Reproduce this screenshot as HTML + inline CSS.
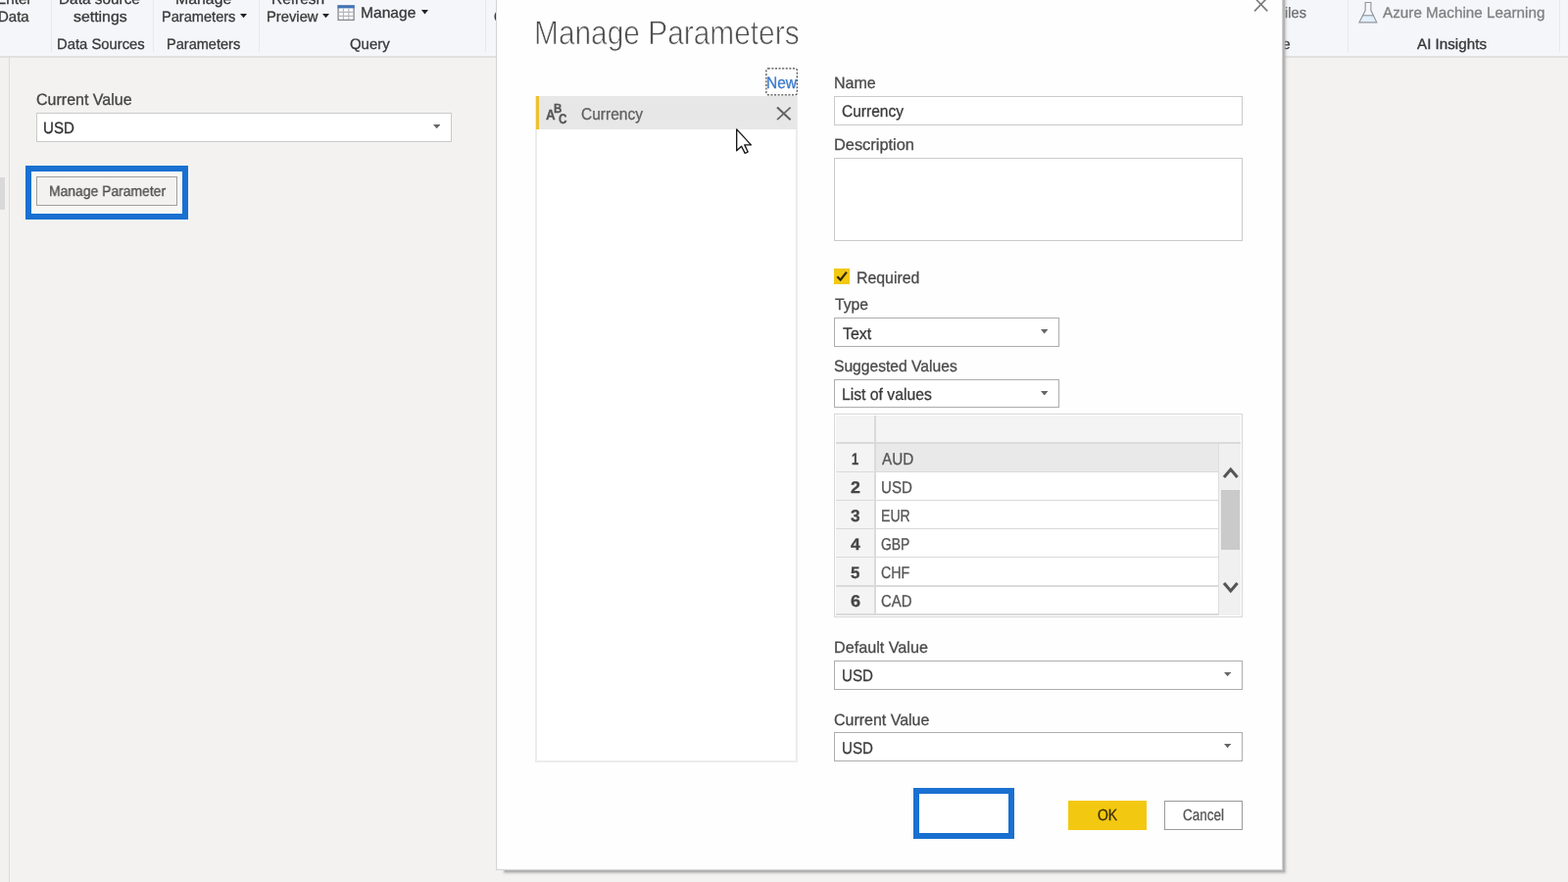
<!DOCTYPE html>
<html lang="en">
<head>
<meta charset="utf-8">
<title>Manage Parameters</title>
<style>
html,body{margin:0;padding:0;}
body{width:1600px;height:900px;overflow:hidden;position:relative;background:#f3f2f0;
 font-family:"Liberation Sans",sans-serif;}
.b,.g{position:absolute;box-sizing:border-box;display:block;margin:0;padding:0;}
.t{position:absolute;white-space:nowrap;transform-origin:0 0;display:block;margin:0;padding:0;
 font-weight:400;-webkit-text-stroke:0.3px currentColor;text-rendering:geometricPrecision;}
#app{left:0;top:0;width:1600px;height:900px;overflow:hidden;will-change:transform;}
#ribbon{overflow:hidden;}
.ribbon-bg{background:#f4f6fa;}
.ribbon-line{background:#e0e0e1;}
.sep{background:#e6e8ec;}
#nav-strip{background:#f2f1ef;border-right:1.2px solid #dcdbda;}
#nav-thumb{background:#d9d9d9;}
#dialog-shadow{background:#b3b2b3;box-shadow:0 0 2.4px 0.8px rgba(160,160,160,.7);}
.dialog-bg{background:#fefefe;border:1.5px solid #d3d3d3;}
#dialog-title{-webkit-text-stroke:0.75px #fefefe;}
.inp{background:#fff;border:1px solid #cacaca;}
.sel{background:#fff;border:1.2px solid #adadad;}
.hl{border:6px solid #1a70d1;}
.param-list{border:2px solid #ececec;border-top:none;background:#fff;}
.param-item{background:#e7e7e7;}
.param-item-bar{background:#ecc32f;}
.grid{background:#fff;border:1.5px solid #d7d7d7;}
.grid-head,.grid-rownum{background:#f4f4f4;}
.grid-sel{background:#e9e9e9;}
.grid-line{background:#dadada;}
.vscroll{background:#f0f0f0;border-left:1px solid #dedede;}
.vthumb{background:#cacaca;}
.btn-primary{background:#f3c811;}
.btn-default{background:#fff;border:1px solid #9a9a9a;}
.btn-plain{border:1px solid #a2a09e;background:#f3f2f0;}
.checkbox{background:#f2c812;}
</style>
</head>
<body>

<div id="app" class="g" style="left:0px;top:0px;width:1600.00px;height:900.00px;">
<header id="ribbon" class="g" role="toolbar" aria-label="Ribbon" style="left:0px;top:0px;width:1600.00px;height:58.50px;">
<i class="b ribbon-bg" style="left:0.00px;top:0.00px;width:1600.00px;height:57.00px;"></i>
<i class="b ribbon-line" style="left:0.00px;top:57.00px;width:1600.00px;height:1.50px;"></i>
<div class="g rgroup" style="left:0px;top:0px;width:52.00px;height:57.00px;">
<span class="t" style="left:-4.22px;top:-9.00px;font-size:15.12px;line-height:17px;color:#383838;transform:scaleX(1.0089);">Enter</span>
<span class="t" style="left:-1.70px;top:9.00px;font-size:15.12px;line-height:17px;color:#383838;transform:scaleX(0.9927);">Data</span>
</div>
<div class="b sep" style="left:52.00px;top:0.00px;width:1.00px;height:52.50px;"></div>
<div class="g rgroup" style="left:53px;top:0px;width:103.00px;height:57.00px;">
<span class="t" style="left:6.77px;top:-9.00px;font-size:15.12px;line-height:17px;color:#383838;transform:scaleX(1.0173);">Data source</span>
<span class="t" style="left:21.56px;top:9.00px;font-size:15.12px;line-height:17px;color:#383838;transform:scaleX(1.0504);">settings</span>
<span class="t rlabel" style="left:5.21px;top:37.00px;font-size:15.12px;line-height:17px;color:#383838;transform:scaleX(0.9803);">Data Sources</span>
</div>
<div class="b sep" style="left:156.00px;top:0.00px;width:1.00px;height:52.50px;"></div>
<div class="g rgroup" style="left:157px;top:0px;width:106.50px;height:57.00px;">
<span class="t" style="left:22.33px;top:-9.00px;font-size:15.12px;line-height:17px;color:#383838;transform:scaleX(1.0501);">Manage</span>
<span class="t" style="left:7.83px;top:9.00px;font-size:15.12px;line-height:17px;color:#383838;transform:scaleX(0.9656);">Parameters</span>
<svg class="b caret" aria-hidden="true" style="left:87.50px;top:14.40px" width="7.00" height="4.20" viewBox="0 0 10 10" preserveAspectRatio="none"><polygon points="0,0 10,0 5,10" fill="#222"/></svg>
<span class="t rlabel" style="left:13.34px;top:37.00px;font-size:15.12px;line-height:17px;color:#383838;transform:scaleX(0.9624);">Parameters</span>
</div>
<div class="b sep" style="left:263.50px;top:0.00px;width:1.00px;height:52.50px;"></div>
<div class="g rgroup" style="left:264px;top:0px;width:230.50px;height:57.00px;">
<span class="t" style="left:12.76px;top:-9.00px;font-size:15.12px;line-height:17px;color:#383838;transform:scaleX(1.0246);">Refresh</span>
<span class="t" style="left:7.82px;top:9.00px;font-size:15.12px;line-height:17px;color:#383838;transform:scaleX(0.9771);">Preview</span>
<svg class="b caret" aria-hidden="true" style="left:64.50px;top:14.40px" width="7.00" height="4.20" viewBox="0 0 10 10" preserveAspectRatio="none"><polygon points="0,0 10,0 5,10" fill="#222"/></svg>
<svg class="b ico" aria-hidden="true" style="left:80.00px;top:4.50px" width="18" height="17" viewBox="0 0 18 17"><rect x="1.1" y="1" width="16" height="14.4" fill="#fcfcfd" stroke="#86868e" stroke-width="1.3"/><rect x="0.5" y="0.4" width="17.2" height="3" fill="#3f73b8"/><path d="M1.5 7.4H16.8M1.5 11.4H16.8M6.4 3.4V15M11.8 3.4V15" stroke="#b4b4ba" stroke-width="1.1" fill="none"/></svg>
<span class="t" style="left:104.15px;top:5.00px;font-size:15.26px;line-height:17px;color:#383838;transform:scaleX(1.0232);">Manage</span>
<svg class="b caret" aria-hidden="true" style="left:166.00px;top:10.20px" width="7.00" height="4.40" viewBox="0 0 10 10" preserveAspectRatio="none"><polygon points="0,0 10,0 5,10" fill="#222"/></svg>
<span class="t rlabel" style="left:93.33px;top:37.00px;font-size:15.12px;line-height:17px;color:#383838;transform:scaleX(0.9883);">Query</span>
</div>
<div class="b sep" style="left:494.50px;top:0.00px;width:1.00px;height:52.50px;"></div>
<div class="g rgroup" style="left:495px;top:0px;width:880.00px;height:57.00px;">
<span class="t" style="left:8.83px;top:9.00px;font-size:15.12px;line-height:17px;color:#383838;transform:scaleX(0.8826);">Columns</span>
<span class="t" style="left:807.06px;top:5.00px;font-size:15.12px;line-height:17px;color:#6e6e6e;transform:scaleX(0.9734);">Files</span>
<span class="t rlabel" style="left:763.39px;top:37.00px;font-size:15.12px;line-height:17px;color:#383838;transform:scaleX(0.9712);">Combine</span>
</div>
<div class="b sep" style="left:1375.00px;top:0.00px;width:1.00px;height:52.50px;"></div>
<div class="g rgroup" style="left:1376px;top:0px;width:214.50px;height:57.00px;">
<svg class="b ico" aria-hidden="true" style="left:8.50px;top:1.00px" width="22" height="24" viewBox="0 0 22 24"><path d="M4.7 14.8H17.2L19.7 21.8H2.1Z" fill="#e2effb"/><path d="M8.2 1.5H13.9V9.6L19.8 21.8H2L8.2 9.6Z" fill="none" stroke="#92969e" stroke-width="1.15" stroke-linejoin="miter"/><path d="M5.2 14.8H16.8" stroke="#8e939c" stroke-width="1.1" fill="none"/></svg>
<span class="t" style="left:35.40px;top:5.00px;font-size:15.26px;line-height:17px;color:#808080;transform:scaleX(1.0007);">Azure Machine Learning</span>
<span class="t rlabel" style="left:70.25px;top:37.00px;font-size:15.12px;line-height:17px;color:#383838;transform:scaleX(1.0062);">AI Insights</span>
</div>
<div class="b sep" style="left:1590.50px;top:0.00px;width:1.00px;height:52.50px;"></div>
</header>
<aside class="b" id="nav-strip" style="left:0.00px;top:58.50px;width:10.20px;height:842.00px;"></aside>
<div class="b" id="nav-thumb" style="left:0.00px;top:181.00px;width:4.75px;height:32.75px;"></div>
<main id="param-pane" class="g" style="left:10px;top:58px;width:496.00px;height:842.00px;">
<label class="t" style="left:26.70px;top:35.00px;font-size:16.42px;line-height:18px;color:#444;transform:scaleX(0.9763);">Current Value</label>
<div class="g field" role="combobox" aria-label="Current Value" style="left:27px;top:56px;width:423.50px;height:30.50px;">
<i class="b inp" style="left:0.00px;top:0.50px;width:423.50px;height:30.00px;"></i>
<span class="t" style="left:7.47px;top:8.00px;font-size:16.42px;line-height:18px;color:#2e2e2e;transform:scaleX(0.9179);">USD</span>
<svg class="b caret" aria-hidden="true" style="left:404.70px;top:12.70px" width="7.40" height="4.20" viewBox="0 0 10 10" preserveAspectRatio="none"><polygon points="0,0 10,0 5,10" fill="#666"/></svg>
</div>
<div class="g callout" style="left:16px;top:110px;width:166.25px;height:55.75px;">
<i class="b hl" style="left:0.00px;top:0.50px;width:166.25px;height:55.25px;border-width:6.2px;background:#f7f7f6;"></i>
<div class="g button" role="button" style="left:11px;top:11px;width:144.00px;height:30.50px;">
<i class="b btn-plain" style="left:0.25px;top:0.75px;width:143.75px;height:29.75px;"></i>
<span class="t" style="left:12.89px;top:8.00px;font-size:14.97px;line-height:17px;color:#4c4c4c;transform:scaleX(0.9291);">Manage Parameter</span>
</div>
</div>
</main>
<div class="b" id="dialog-shadow" style="left:515.00px;top:-10.00px;width:795.80px;height:899.80px;"></div>
<section id="dialog" class="g" role="dialog" aria-label="Manage Parameters" style="left:506px;top:-10px;width:802.60px;height:897.60px;">
<i class="b dialog-bg" style="left:0.00px;top:0.00px;width:802.60px;height:897.60px;"></i>
<h1 class="t" id="dialog-title" style="left:39.41px;top:25.00px;font-size:34.30px;line-height:38px;color:#4f4f4f;transform:scaleX(0.8708);">Manage Parameters</h1>
<svg class="b close" aria-hidden="true" style="left:773.00px;top:7.00px" width="16" height="16" viewBox="0 0 16 16"><path d="M1.1 0.6L14.3 14.4M14.3 0.6L1.1 14.4" stroke="#7a7a7a" stroke-width="1.6" fill="none"/></svg>
<div class="g plist" role="listbox" style="left:40px;top:108px;width:268.20px;height:680.00px;">
<i class="b param-list" style="left:0.00px;top:0.00px;width:268.20px;height:680.00px;"></i>
<div class="g pitem" role="option" aria-selected="true" style="left:1px;top:0px;width:266.00px;height:33.60px;">
<i class="b param-item" style="left:0.00px;top:0.00px;width:266.00px;height:33.60px;"></i>
<div class="b param-item-bar" style="left:-0.20px;top:0.00px;width:3.20px;height:33.60px;"></div>
<span class="t" style="left:9.67px;top:12.00px;font-size:14.53px;line-height:16px;color:#555;font-weight:700;transform:scaleX(0.9207);">A</span>
<span class="t" style="left:18.45px;top:5.00px;font-size:13.23px;line-height:15px;color:#555;font-weight:700;transform:scaleX(0.8764);">B</span>
<span class="t" style="left:23.33px;top:15.00px;font-size:13.95px;line-height:16px;color:#555;font-weight:700;transform:scaleX(0.8425);">C</span>
<span class="t" style="left:45.97px;top:9.00px;font-size:16.86px;line-height:19px;color:#606060;transform:scaleX(0.9213);">Currency</span>
<svg class="b remove" aria-hidden="true" style="left:244.50px;top:11.00px" width="16" height="14" viewBox="0 0 16 14"><path d="M1 0.4L14.6 13.2" stroke="#606060" stroke-width="2" fill="none"/><path d="M14.6 0.6L1 13.2" stroke="#666" stroke-width="1.7" fill="none"/></svg>
</div>
</div>
<svg class="b focus" aria-hidden="true" style="left:275.00px;top:79.30px" width="33" height="28.5" viewBox="0 0 33 28.5"><rect x="0.9" y="0.9" width="31.4" height="26.9" rx="1.8" fill="none" stroke="#4a4a4a" stroke-width="1.2" stroke-dasharray="2.1 1.5"/></svg>
<a class="t" style="left:275.66px;top:85.00px;font-size:16.86px;line-height:19px;color:#3a79cc;transform:scaleX(0.9193);">New</a>
<div class="g form" style="left:345px;top:80px;width:417.20px;height:710.00px;">
<label class="t" style="left:-0.03px;top:6.00px;font-size:16.42px;line-height:18px;color:#4a4a4a;transform:scaleX(0.9749);">Name</label>
<div class="g field" role="textbox" aria-label="Name" style="left:0px;top:28px;width:417.00px;height:30.00px;">
<i class="b inp" style="left:0.00px;top:0.00px;width:417.00px;height:30.00px;"></i>
<span class="t" style="left:7.82px;top:6.00px;font-size:16.72px;line-height:19px;color:#3a3a3a;transform:scaleX(0.9300);">Currency</span>
</div>
<label class="t" style="left:0.09px;top:69.00px;font-size:16.42px;line-height:18px;color:#4a4a4a;transform:scaleX(0.9977);">Description</label>
<div class="b inp" role="textbox" aria-label="Description" style="left:0.00px;top:90.50px;width:417.00px;height:85.30px;"></div>
<div class="b checkbox" role="checkbox" aria-checked="true" style="left:0.00px;top:204.00px;width:16.00px;height:16.00px;"></div>
<svg class="b ico" aria-hidden="true" style="left:0.00px;top:204.00px" width="16" height="16" viewBox="0 0 16 16"><path d="M3.3 8.3L6.6 11.6L12.9 3.6" stroke="#332800" stroke-width="2.3" fill="none"/></svg>
<label class="t" style="left:22.83px;top:204.00px;font-size:16.72px;line-height:19px;color:#4a4a4a;transform:scaleX(0.9497);">Required</label>
<label class="t" style="left:0.59px;top:232.00px;font-size:16.42px;line-height:18px;color:#4a4a4a;transform:scaleX(0.9574);">Type</label>
<div class="g field" role="combobox" aria-label="Type" style="left:0px;top:254px;width:230.00px;height:30.00px;">
<i class="b sel" style="left:0.00px;top:0.00px;width:230.00px;height:30.00px;"></i>
<span class="t" style="left:8.68px;top:7.00px;font-size:16.72px;line-height:19px;color:#3a3a3a;transform:scaleX(0.9516);">Text</span>
<svg class="b caret" aria-hidden="true" style="left:210.80px;top:12.00px" width="7.40" height="4.60" viewBox="0 0 10 10" preserveAspectRatio="none"><polygon points="0,0 10,0 5,10" fill="#666"/></svg>
</div>
<label class="t" style="left:0.20px;top:295.00px;font-size:16.42px;line-height:18px;color:#4a4a4a;transform:scaleX(0.9527);">Suggested Values</label>
<div class="g field" role="combobox" aria-label="Suggested Values" style="left:0px;top:316px;width:230.00px;height:30.20px;">
<i class="b sel" style="left:0.00px;top:0.50px;width:230.00px;height:29.70px;"></i>
<span class="t" style="left:7.74px;top:7.00px;font-size:16.86px;line-height:19px;color:#3a3a3a;transform:scaleX(0.9328);">List of values</span>
<svg class="b caret" aria-hidden="true" style="left:210.80px;top:12.60px" width="7.40" height="4.60" viewBox="0 0 10 10" preserveAspectRatio="none"><polygon points="0,0 10,0 5,10" fill="#666"/></svg>
</div>
<div class="g values" role="grid" style="left:0px;top:352px;width:417.10px;height:208.20px;">
<i class="b grid" style="left:0.10px;top:0.10px;width:417.00px;height:208.10px;"></i>
<div class="b grid-head" style="left:1.80px;top:1.80px;width:413.60px;height:27.40px;"></div>
<div class="b grid-rownum" style="left:1.80px;top:29.20px;width:39.60px;height:177.30px;"></div>
<div class="b grid-sel" style="left:43.00px;top:30.80px;width:349.40px;height:28.00px;"></div>
<div class="g scroll" role="scrollbar" style="left:392px;top:30px;width:23.40px;height:176.50px;">
<i class="b vscroll" style="left:0.40px;top:0.80px;width:23.00px;height:175.70px;"></i>
<div class="b vthumb" style="left:2.60px;top:48.00px;width:19.40px;height:60.60px;"></div>
<svg class="b ico" aria-hidden="true" style="left:3.00px;top:23.00px" width="20" height="16" viewBox="0 0 20 16"><path d="M3 12L9.8 4.1L16.6 12" stroke="#555" stroke-width="3.1" fill="none"/></svg>
<svg class="b ico" aria-hidden="true" style="left:3.00px;top:139.00px" width="20" height="16" viewBox="0 0 20 16"><path d="M3 4L9.8 11.9L16.6 4" stroke="#555" stroke-width="3.1" fill="none"/></svg>
</div>
<div class="b grid-line" style="left:41.35px;top:1.80px;width:1.50px;height:204.70px;"></div>
<div class="b grid-line" style="left:1.80px;top:29.25px;width:413.60px;height:1.50px;"></div>
<div class="b grid-line" style="left:1.80px;top:58.75px;width:390.60px;height:1.50px;"></div>
<div class="b grid-line" style="left:1.80px;top:87.55px;width:390.60px;height:1.50px;"></div>
<div class="b grid-line" style="left:1.80px;top:116.65px;width:390.60px;height:1.50px;"></div>
<div class="b grid-line" style="left:1.80px;top:145.95px;width:390.60px;height:1.50px;"></div>
<div class="b grid-line" style="left:1.80px;top:175.05px;width:390.60px;height:1.50px;"></div>
<div class="b grid-line" style="left:1.80px;top:204.15px;width:390.60px;height:1.50px;"></div>
<span class="t rownum" style="left:17.80px;top:37.00px;font-size:16.86px;line-height:19px;color:#454545;font-weight:700;transform:scaleX(0.7612);">1</span>
<span class="t cell" style="left:49.00px;top:36.00px;font-size:17.15px;line-height:20px;color:#555;transform:scaleX(0.8894);">AUD</span>
<span class="t rownum" style="left:16.62px;top:66.00px;font-size:16.86px;line-height:19px;color:#454545;font-weight:700;transform:scaleX(1.0517);">2</span>
<span class="t cell" style="left:47.87px;top:65.00px;font-size:17.15px;line-height:20px;color:#555;transform:scaleX(0.8790);">USD</span>
<span class="t rownum" style="left:16.81px;top:95.00px;font-size:16.86px;line-height:19px;color:#454545;font-weight:700;transform:scaleX(1.0201);">3</span>
<span class="t cell" style="left:47.87px;top:94.00px;font-size:17.15px;line-height:20px;color:#555;transform:scaleX(0.8214);">EUR</span>
<span class="t rownum" style="left:16.54px;top:124.00px;font-size:16.86px;line-height:19px;color:#454545;font-weight:700;transform:scaleX(1.0372);">4</span>
<span class="t cell" style="left:48.30px;top:123.00px;font-size:17.15px;line-height:20px;color:#555;transform:scaleX(0.8122);">GBP</span>
<span class="t rownum" style="left:16.90px;top:153.00px;font-size:16.86px;line-height:19px;color:#454545;font-weight:700;transform:scaleX(0.9964);">5</span>
<span class="t cell" style="left:48.29px;top:152.00px;font-size:17.15px;line-height:20px;color:#555;transform:scaleX(0.8298);">CHF</span>
<span class="t rownum" style="left:16.57px;top:182.00px;font-size:16.86px;line-height:19px;color:#454545;font-weight:700;transform:scaleX(1.0706);">6</span>
<span class="t cell" style="left:48.26px;top:181.00px;font-size:17.15px;line-height:20px;color:#555;transform:scaleX(0.8681);">CAD</span>
</div>
<label class="t" style="left:-0.04px;top:582.00px;font-size:16.42px;line-height:18px;color:#4a4a4a;transform:scaleX(0.9855);">Default Value</label>
<div class="g field" role="combobox" aria-label="Default Value" style="left:0px;top:603px;width:417.00px;height:30.80px;">
<i class="b sel" style="left:0.00px;top:0.60px;width:417.00px;height:30.20px;"></i>
<span class="t" style="left:7.87px;top:7.00px;font-size:16.72px;line-height:19px;color:#3a3a3a;transform:scaleX(0.9019);">USD</span>
<svg class="b caret" aria-hidden="true" style="left:398.00px;top:13.00px" width="7.20" height="4.20" viewBox="0 0 10 10" preserveAspectRatio="none"><polygon points="0,0 10,0 5,10" fill="#666"/></svg>
</div>
<label class="t" style="left:0.20px;top:656.00px;font-size:16.42px;line-height:18px;color:#4a4a4a;transform:scaleX(0.9738);">Current Value</label>
<div class="g field" role="combobox" aria-label="Current Value" style="left:0px;top:677px;width:417.00px;height:30.20px;">
<i class="b sel" style="left:0.00px;top:0.20px;width:417.00px;height:30.00px;"></i>
<span class="t" style="left:7.87px;top:7.00px;font-size:16.72px;line-height:19px;color:#3a3a3a;transform:scaleX(0.9019);">USD</span>
<svg class="b caret" aria-hidden="true" style="left:398.00px;top:12.40px" width="7.20" height="4.20" viewBox="0 0 10 10" preserveAspectRatio="none"><polygon points="0,0 10,0 5,10" fill="#666"/></svg>
</div>
</div>
<div class="b hl" style="left:426.00px;top:813.60px;width:103.00px;height:52.20px;background:#fff;"></div>
<div class="g button" role="button" style="left:584px;top:826px;width:80.00px;height:30.60px;">
<i class="b btn-primary" style="left:0.20px;top:0.70px;width:79.80px;height:29.90px;"></i>
<span class="t" style="left:29.97px;top:7.00px;font-size:16.28px;line-height:18px;color:#3a3000;transform:scaleX(0.8573);">OK</span>
</div>
<div class="g button" role="button" style="left:681px;top:826px;width:81.00px;height:30.80px;">
<i class="b btn-default" style="left:0.70px;top:0.50px;width:80.30px;height:30.30px;"></i>
<span class="t" style="left:19.82px;top:7.00px;font-size:16.28px;line-height:18px;color:#555;transform:scaleX(0.8300);">Cancel</span>
</div>
</section>
<svg class="b pointer" aria-hidden="true" style="left:749.50px;top:129.50px" width="20" height="30" viewBox="0 0 20 30"><path d="M1.7 1.9V23.8L6.6 19.2L10.2 26.4L13.2 25L9.8 17.9H16.4Z" fill="#fff" stroke="#161616" stroke-width="1.35" stroke-linejoin="round"/></svg>
</div>
</body>
</html>
